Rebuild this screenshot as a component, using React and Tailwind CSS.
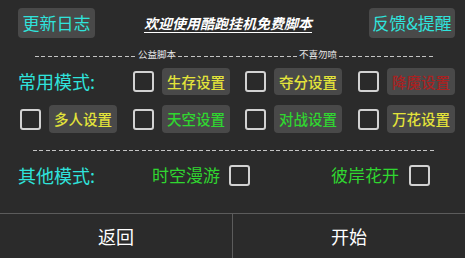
import React from 'react'

const font = { fontFamily: '"Noto Sans CJK SC", "Noto Sans", sans-serif' }

function Box() {
  return <div className="w-[21px] h-[21px] border-2 border-[#d2d2d2] rounded-[3px] bg-[#2a2a2a]" />
}

function SetBtn({ label, color }) {
  return (
    <div className={`w-[68px] h-full rounded-[4px] bg-[#494949] flex items-center justify-center text-[14.5px] font-medium ${color}`}>
      {label}
    </div>
  )
}

function Cell({ label, color }) {
  return (
    <div className="flex items-center gap-[8px] h-full">
      <Box />
      <SetBtn label={label} color={color} />
    </div>
  )
}

function Dash({ className }) {
  return <div className={`h-[1px] bg-[repeating-linear-gradient(90deg,#c4c4c4_0_4px,transparent_4px_6.4px)] ${className}`} />
}

export default function App() {
  return (
    <div className="w-[465px] h-[258px] bg-[#2b2b2b] flex flex-col select-none overflow-hidden" style={font}>
      {/* header */}
      <div className="flex items-center h-[30px] mt-[8px] pl-[18px] pr-[10px]">
        <div className="w-[77px] h-full rounded-[4px] bg-[#494949] flex items-center justify-center text-[17px] text-[#2fe3dc]">
          更新日志
        </div>
        <div className="flex-1 flex justify-center pr-[8px]">
          <span className="text-[14px] italic font-bold text-white underline underline-offset-[3px] decoration-[1px]">
            欢迎使用酷跑挂机免费脚本
          </span>
        </div>
        <div className="w-[86px] h-full rounded-[4px] bg-[#494949] flex items-center justify-center text-[17px] text-[#2fe3dc]">
          反馈&amp;提醒
        </div>
      </div>

      {/* dashed title line */}
      <div className="flex items-center h-[12px] mt-[11px] pl-[35px] text-[9.5px] text-[#e8e8e8] leading-none">
        <Dash className="w-[101px] mt-[3px]" />
        <span className="mx-[2px]">公益脚本</span>
        <Dash className="w-[119px] mt-[3px]" />
        <span className="mx-[2px]">不喜勿喷</span>
        <Dash className="w-[95px] mt-[3px]" />
      </div>

      {/* row 1 */}
      <div className="grid grid-cols-[113px_112px_113px_112px] h-[27px] mt-[7px] pl-[20px]">
        <div className="flex items-center -ml-[2px] text-[18px] text-[#2fe3dc]">常用模式:</div>
        <Cell label="生存设置" color="text-[#e3e33a]" />
        <Cell label="夺分设置" color="text-[#e3e33a]" />
        <Cell label="降魔设置" color="text-[#a82222]" />
      </div>

      {/* row 2 */}
      <div className="grid grid-cols-[113px_112px_113px_112px] h-[28px] mt-[10px] pl-[20px]">
        <Cell label="多人设置" color="text-[#e3e33a]" />
        <Cell label="天空设置" color="text-[#30d630]" />
        <Cell label="对战设置" color="text-[#30d630]" />
        <Cell label="万花设置" color="text-[#e3e33a]" />
      </div>

      <Dash className="w-[401px] ml-[33px] mt-[17px] bg-[repeating-linear-gradient(90deg,#c4c4c4_0_3px,transparent_3px_4.4px)]" />

      {/* row 3 */}
      <div className="flex items-center h-[22px] mt-[13px] pl-[18px]">
        <div className="w-[134px] text-[18px] text-[#2fe3dc]">其他模式:</div>
        <span className="text-[17px] text-[#30d630]">时空漫游</span>
        <div className="ml-[9px]"><Box /></div>
        <span className="ml-[81px] text-[17px] text-[#30d630]">彼岸花开</span>
        <div className="ml-[10px]"><Box /></div>
      </div>

      <div className="flex-1" />

      {/* bottom */}
      <div className="h-[45px] border-t border-[#5c5c5c] flex text-[18px] text-white">
        <div className="w-[233px] flex items-center justify-center border-r border-[#5c5c5c]">返回</div>
        <div className="flex-1 flex items-center justify-center">开始</div>
      </div>
    </div>
  )
}
